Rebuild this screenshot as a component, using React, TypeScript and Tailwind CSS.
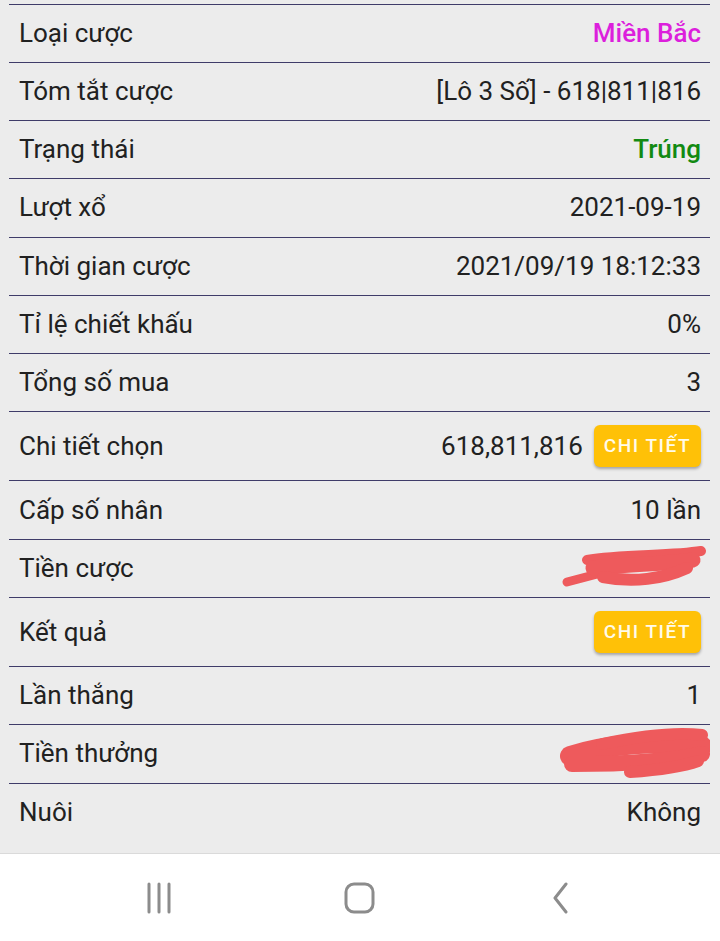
import React from 'react';

type Row = {
  label: string;
  value?: string;
  tone?: 'magenta' | 'green';
  button?: boolean;
  scribble?: 'small' | 'big';
};

const ROWS: Row[] = [
  { label: 'Loại cược', value: 'Miền Bắc', tone: 'magenta' },
  { label: 'Tóm tắt cược', value: '[Lô 3 Số] - 618|811|816' },
  { label: 'Trạng thái', value: 'Trúng', tone: 'green' },
  { label: 'Lượt xổ', value: '2021-09-19' },
  { label: 'Thời gian cược', value: '2021/09/19 18:12:33' },
  { label: 'Tỉ lệ chiết khấu', value: '0%' },
  { label: 'Tổng số mua', value: '3' },
  { label: 'Chi tiết chọn', value: '618,811,816', button: true },
  { label: 'Cấp số nhân', value: '10 lần' },
  { label: 'Tiền cược', scribble: 'small' },
  { label: 'Kết quả', button: true },
  { label: 'Lần thắng', value: '1' },
  { label: 'Tiền thưởng', scribble: 'big' },
  { label: 'Nuôi', value: 'Không' },
];

const DetailButton = () => (
  <button className="h-[42px] px-[10px] rounded-[6px] bg-[#ffc107] text-[#fffbea] text-[19px] font-medium tracking-[0.08em] shadow-[0_2px_3px_rgba(0,0,0,0.3)]">
    CHI TIẾT
  </button>
);

// the red pen marks that hide the amounts
const SmallScribble = () => (
  <svg width="146" height="45" viewBox="0 0 146 45" fill="none" stroke="#ee5a5c" strokeLinecap="round" className="-mr-[6px]">
    <path d="M6 36 L44 26" strokeWidth="9" />
    <path d="M26 14 C60 8 110 10 140 5" strokeWidth="10" />
    <path d="M32 22 C70 18 108 18 132 14" strokeWidth="15" />
    <path d="M42 31 C72 37 102 33 126 22" strokeWidth="12" />
  </svg>
);

const BigScribble = () => (
  <svg width="152" height="55" viewBox="0 0 152 55" fill="none" stroke="#ee5a5c" strokeLinecap="round" className="-mr-[9px]">
    <path d="M12 30 C50 18 100 14 144 20" strokeWidth="20" />
    <path d="M44 18 C82 10 120 6 144 9" strokeWidth="12" />
    <path d="M14 38 C60 38 110 36 144 28" strokeWidth="16" />
    <path d="M72 46 C100 44 126 40 140 35" strokeWidth="12" />
  </svg>
);

export default function App() {
  return (
    <div className="min-h-[941px] bg-white flex flex-col font-['Roboto','Noto_Sans',sans-serif] text-[#212121]">
      <div className="bg-[#ececec] pt-[4px] pb-[11px] pl-[9px] pr-[10px] border-b border-[#dadada]">
        <div className="border-t border-[#3f3c69]">
          {ROWS.map((row, i) => (
            <div
              key={row.label}
              className={`flex items-center justify-between pl-[10px] pr-[9px] text-[26px] ${
                row.button ? 'h-[69.5px]' : 'h-[58.15px]'
              } ${i < ROWS.length - 1 ? 'border-b border-[#3f3c69]' : ''}`}
            >
              <span>{row.label}</span>
              <div className="flex items-center gap-[11px]">
                {row.value && (
                  <span
                    className={
                      row.tone === 'magenta'
                        ? 'text-[#dc1fdc] font-medium'
                        : row.tone === 'green'
                        ? 'text-[#128a12] font-medium'
                        : ''
                    }
                  >
                    {row.value}
                  </span>
                )}
                {row.button && <DetailButton />}
                {row.scribble === 'small' && <SmallScribble />}
                {row.scribble === 'big' && <BigScribble />}
              </div>
            </div>
          ))}
        </div>
      </div>

      {/* android nav bar */}
      <div className="h-[89px] flex justify-center items-center">
        <div className="w-[201px] flex justify-center">
          <svg width="28" height="32" viewBox="0 0 28 32" fill="none" stroke="#8c8c8c" strokeWidth="3" strokeLinecap="round">
            <path d="M4 2 V30" />
            <path d="M14 2 V30" />
            <path d="M24 2 V30" />
          </svg>
        </div>
        <div className="w-[201px] flex justify-center">
          <svg width="32" height="32" viewBox="0 0 32 32" fill="none" stroke="#8c8c8c" strokeWidth="3">
            <rect x="2" y="2" width="27" height="28" rx="8" />
          </svg>
        </div>
        <div className="w-[201px] flex justify-center">
          <svg width="20" height="32" viewBox="0 0 20 32" fill="none" stroke="#8c8c8c" strokeWidth="3" strokeLinecap="round" strokeLinejoin="round">
            <path d="M15 2 L4 16 L15 30" />
          </svg>
        </div>
      </div>
    </div>
  );
}
